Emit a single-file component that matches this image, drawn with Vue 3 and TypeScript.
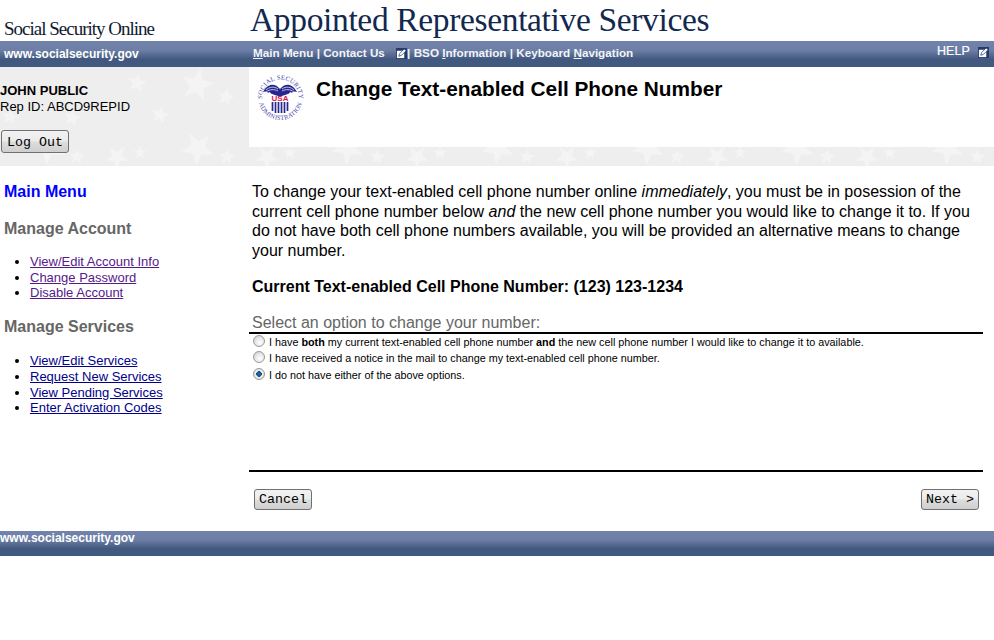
<script setup lang="ts">
import { ref } from 'vue'

const option = ref('none')

const accountLinks = ['View/Edit Account Info', 'Change Password', 'Disable Account']
const serviceLinks = ['View/Edit Services', 'Request New Services', 'View Pending Services', 'Enter Activation Codes']

// star positions for the grey patterned band: x, y, radius, rotation
const stars: [number, number, number, number][] = [
  [10, 117, 8, 0.2], [72, 118, 9, 0.2], [137, 83, 10, 0.2], [197, 85, 17, 0.2], [226, 97, 9, 0.2], [160, 115, 9, 0.2]
]
// the lower strip repeats every 150px
for (let k = 0; k < 7; k++) {
  const dx = k * 150
  stars.push([48 + dx, 148, 17, Math.PI + 0.1])
  stars.push([77 + dx, 157, 8, 0.1])
  stars.push([117 + dx, 157, 12, Math.PI])
  stars.push([140 + dx, 153, 7, 0])
}

function starPoints(cx: number, cy: number, r: number, rot: number) {
  const pts: string[] = []
  for (let i = 0; i < 10; i++) {
    const rad = i % 2 === 0 ? r : r * 0.42
    const a = -Math.PI / 2 + (i * Math.PI) / 5 + rot
    pts.push(`${(cx + rad * Math.cos(a)).toFixed(1)},${(cy - 67 + rad * Math.sin(a)).toFixed(1)}`)
  }
  return pts.join(' ')
}
</script>

<template>
  <div class="page">
    <header class="masthead">
      <div class="site-name">Social Security Online</div>
      <div class="app-name">Appointed Representative Services</div>
    </header>

    <nav class="nav-bar">
      <a class="site-url">www.socialsecurity.gov</a>
      <div class="nav-links">
        <span><u>M</u>ain Menu</span> | <span>Contact Us</span>
        <svg class="edit-icon first" viewBox="0 0 12 12">
          <rect width="12" height="12" fill="#25396b" />
          <rect x="1" y="3" width="8" height="8" fill="#fff" />
          <path d="M3 9l1-3 5-5 2 2-5 5z" fill="#fff" stroke="#25396b" stroke-width=".8" />
        </svg>
        | <span>BSO <u>I</u>nformation</span> | <span>Keyboard <u>N</u>avigation</span>
      </div>
      <div class="help">
        HELP
        <svg class="edit-icon" viewBox="0 0 12 12">
          <rect width="12" height="12" fill="#25396b" />
          <rect x="1" y="3" width="8" height="8" fill="#fff" />
          <path d="M3 9l1-3 5-5 2 2-5 5z" fill="#fff" stroke="#25396b" stroke-width=".8" />
        </svg>
      </div>
    </nav>

    <section class="banner">
      <svg class="stars" width="994" height="99" viewBox="0 0 994 99">
        <polygon v-for="(s, i) in stars" :key="i" :points="starPoints(s[0], s[1], s[2], s[3])" fill="#f4f4f4" />
      </svg>
      <div class="user-box">
        <div class="user-name">JOHN PUBLIC</div>
        <div>Rep ID: ABCD9REPID</div>
        <button class="btn logout">Log Out</button>
      </div>
      <div class="title-box">
        <svg class="seal" width="48" height="48" viewBox="0 0 48 48">
          <defs>
            <path id="arcTop" d="M5 24A18.500 18.500 0 0 1 42 24" />
            <path id="arcBottom" d="M1.500 24A22 22 0 0 0 45.500 24" />
          </defs>
          <text class="seal-text"><textPath href="#arcTop" startOffset="50%" text-anchor="middle">SOCIAL SECURITY</textPath></text>
          <text class="seal-text"><textPath href="#arcBottom" startOffset="50%" text-anchor="middle">ADMINISTRATION</textPath></text>
          <path d="M23 15C18 9 11 9 6 18 10 16 10 20 13 18 14 21 18 20 23 23 28 20 32 21 33 18 36 20 36 16 40 18 35 9 28 9 23 15Z" fill="#27278f" />
          <path d="M9 16c3-3 8-4 12-1M9 18c4-3 8-3 12-1M25 15c4-3 9-2 12 1M25 17c4-2 8-2 12 1" fill="none" stroke="#fff" stroke-width=".7" />
          <text x="23" y="26.500" class="seal-usa">USA</text>
          <path d="M15.500 28v9M18.500 28v11M21.500 28v11M24.500 28v11M27.500 28v11M30.500 28v9" stroke="#27278f" stroke-width="1.700" />
        </svg>
        <h1>Change Text-enabled Cell Phone Number</h1>
      </div>
    </section>

    <div class="columns">
      <aside class="side-menu">
        <a class="main-menu">Main Menu</a>
        <h3>Manage Account</h3>
        <ul>
          <li v-for="l in accountLinks" :key="l"><a class="visited">{{ l }}</a></li>
        </ul>
        <h3 class="services">Manage Services</h3>
        <ul>
          <li v-for="l in serviceLinks" :key="l"><a>{{ l }}</a></li>
        </ul>
      </aside>

      <main class="content">
        <p class="intro">
          To change your text-enabled cell phone number online <em>immediately</em>, you must be in posession of the
          current cell phone number below <em>and</em> the new cell phone number you would like to change it to. If you
          do not have both cell phone numbers available, you will be provided an alternative means to change
          your number.
        </p>
        <p class="current">Current Text-enabled Cell Phone Number: (123) 123-1234</p>
        <div class="select-head">Select an option to change your number:</div>
        <label class="opt">
          <input v-model="option" type="radio" value="both" />
          <span>I have <b>both</b> my current text-enabled cell phone number <b>and</b> the new cell phone number I would like to change it to available.</span>
        </label>
        <label class="opt">
          <input v-model="option" type="radio" value="notice" />
          <span>I have received a notice in the mail to change my text-enabled cell phone number.</span>
        </label>
        <label class="opt">
          <input v-model="option" type="radio" value="none" />
          <span>I do not have either of the above options.</span>
        </label>
        <div class="actions">
          <button class="btn">Cancel</button>
          <button class="btn">Next &gt;</button>
        </div>
      </main>
    </div>

    <footer class="foot-bar">www.socialsecurity.gov</footer>
  </div>
</template>

<style>
html, body { margin: 0; background: #fff; }
</style>

<style scoped>
.page {
  width: 994px;
  height: 640px;
  overflow: hidden;
  font-family: "Liberation Sans", Arial, sans-serif;
  color: #000;
}
.masthead {
  height: 41px;
  display: flex;
  align-items: flex-end;
  font-family: "Liberation Serif", "Times New Roman", serif;
  color: #12284f;
}
.site-name {
  width: 249px;
  padding: 0 0 1px 4px;
  box-sizing: border-box;
  font-size: 19px;
  letter-spacing: -1px;
  color: #111a30;
}
.app-name {
  font-size: 33.500px;
  line-height: 41px;
  letter-spacing: -0.35px;
  position: relative;
  top: -1px;
  left: 1px;
}
.nav-bar, .foot-bar {
  background: linear-gradient(#7283ab 0, #6d7fa6 35%, #42597f 70%, #405a80 100%);
  color: #fff;
  font-weight: bold;
}
.nav-bar {
  height: 26px;
  display: flex;
  align-items: center;
  font-size: 11.700px;
  position: relative;
}
.site-url {
  width: 249px;
  padding-left: 4px;
  box-sizing: border-box;
  font-size: 12px;
}
.nav-links { padding: 0 0 3px 4px; color: #f2f4f8; }
.edit-icon { width: 11px; height: 11px; vertical-align: -2px; }
.edit-icon.first { margin: 0 -3px 0 11px; }
.help {
  position: absolute;
  right: 5px;
  top: 3px;
  font-weight: normal;
  font-size: 12.500px;
  -webkit-text-stroke: 0.2px #fff;
}
.help .edit-icon { margin-left: 5px; vertical-align: -3px; }
.banner {
  height: 99px;
  background: #eeeeee;
  display: flex;
  position: relative;
  overflow: hidden;
}
.stars { position: absolute; left: 0; top: 0; }
.user-box {
  width: 249px;
  position: relative;
  font-size: 13px;
  line-height: 16px;
  padding-top: 16px;
  box-sizing: border-box;
}
.user-name { font-weight: bold; }
.btn {
  font-family: "Liberation Mono", "Courier New", monospace;
  font-size: 13.300px;
  height: 23px;
  padding: 0 4px;
  border: 1px solid #707070;
  border-radius: 3px;
  background: linear-gradient(#f2f2f2 0, #ebebeb 48%, #dddddd 52%, #cfcfcf 100%);
  color: #000;
}
.logout { display: block; margin: 15px 0 0 1px; width: 68px; padding-top: 1px; }
.title-box {
  position: relative;
  flex: 1;
  height: 80px;
  background: #fff;
  display: flex;
  align-items: flex-start;
}
.seal { margin: 7px 0 0 8px; }
.seal-text { font-family: "Liberation Serif", serif; font-size: 6.500px; fill: #4646a8; letter-spacing: .2px; }
.seal-usa { font-family: "Liberation Sans", sans-serif; font-size: 8px; font-weight: bold; fill: #d8174a; text-anchor: middle; }
h1 {
  margin: 9px 0 0 11px;
  font-size: 20.800px;
  line-height: 26px;
  font-weight: bold;
}
.columns { display: flex; height: 365px; }
.side-menu {
  width: 249px;
  box-sizing: border-box;
  padding: 17px 0 0 4px;
  font-size: 13px;
}
.main-menu { display: block; color: #0000ff; font-size: 16px; font-weight: bold; line-height: 18px; }
.side-menu h3 {
  margin: 19px 0 16px;
  font-size: 16px;
  line-height: 18px;
  color: #666;
}
.side-menu h3.services { margin: 17px 0 17px; }
.side-menu ul { margin: 0; padding-left: 26px; color: #000; }
.side-menu li { line-height: 15.700px; }
.side-menu a:not(.main-menu) { color: #00008b; text-decoration: underline; }
.side-menu a.visited { color: #551a8b !important; }
.content { width: 734px; padding-top: 16px; }
.intro {
  margin: 0 0 0 3px;
  font-size: 16px;
  line-height: 19.700px;
  width: 729px;
}
.intro em { font-style: italic; }
.current {
  margin: 17px 0 0 3px;
  font-size: 16px;
  line-height: 18px;
  font-weight: bold;
}
.select-head {
  margin-top: 18px;
  padding-left: 3px;
  font-size: 16px;
  line-height: 18px;
  color: #666;
  border-bottom: 2px solid #000;
  height: 18px;
}
.opt {
  display: flex;
  align-items: center;
  font-size: 10.800px;
  height: 16.300px;
  padding-left: 4px;
}
.opt input {
  appearance: none;
  width: 12px;
  height: 12px;
  margin: 0 4px 2px 0;
  border: 1px solid #9a9a9a;
  border-radius: 50%;
  background: radial-gradient(circle at 60% 65%, #fff 0, #e4e4e4 55%, #c4c4c4 100%);
  box-sizing: border-box;
}
.opt input:checked {
  background: radial-gradient(circle at 50% 50%, #1f6fb5 0, #14507f 38%, #f0f0f0 42%, #d8d8d8 100%);
}
.actions {
  margin-top: 87px;
  border-top: 2px solid #000;
  padding: 17px 4px 0 5px;
  display: flex;
  justify-content: space-between;
}
.actions .btn { height: 21px; padding: 0 4px; width: 58px; }
.foot-bar {
  height: 25px;
  font-size: 12px;
  line-height: 14px;
  box-sizing: border-box;
  padding-top: 0;
}
</style>
